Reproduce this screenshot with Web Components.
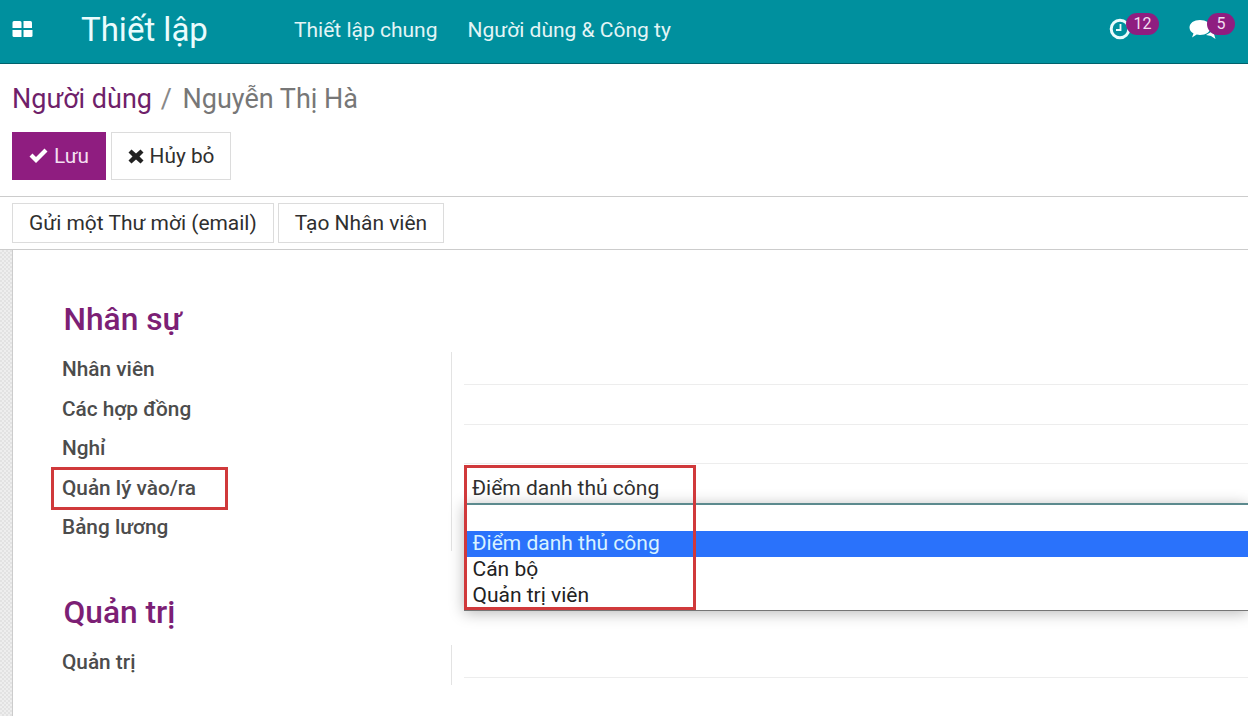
<!DOCTYPE html>
<html><head><meta charset="utf-8">
<style>
html,body{margin:0;padding:0;background:#fff;height:716px;overflow:hidden;font-family:Roboto,sans-serif}
</style></head><body>
<app-shell></app-shell>
<script>
function el(name,html,init){customElements.define(name,class extends HTMLElement{constructor(){super();this.attachShadow({mode:'open'}).innerHTML=html;}connectedCallback(){if(init)init(this);}});}
el('top-nav',`<style>
:host{display:flex;align-items:center;height:63px;background:#00909e;border-bottom:1px solid #00626c;color:#fff;font-family:Roboto,sans-serif;position:relative}
.apps{margin-left:12px;width:22px;height:18px;display:block;margin-top:-5px}
.brand{margin-left:47px;font-size:33px;line-height:40px;color:#eafcfd;margin-top:-4px;width:213px}
a{font-size:21px;color:#e3f5f6;margin-right:30px;margin-top:-4px}
.sp{flex:1}
.ic{position:absolute;display:block}
.badge{position:absolute;background:#8f1d80;color:#f3dff0;font-size:16px;height:22px;line-height:22px;border-radius:11px;text-align:center;top:13px}
</style>
<svg class="apps" viewBox="0 0 22 18"><g fill="#fff"><path d="M2 1h6a1.5 1.5 0 0 1 1.500 1.500V8H.5V2.500A1.500 1.500 0 0 1 2 1z"/><path d="M12 1h7a1.500 1.500 0 0 1 1.500 1.500V8H12z" transform="translate(-.5 0)"/><path d="M.5 10h9v7H2a1.500 1.500 0 0 1-1.500-1.500z"/><path d="M11.500 10h9v5.500A1.500 1.500 0 0 1 19 17h-7.500z"/></g></svg>
<div class="brand">Thiết lập</div><a>Thiết lập chung</a><a>Người dùng &amp; Công ty</a><div class="sp"></div>
<svg class="ic" style="left:1109px;top:18px" width="22" height="22" viewBox="0 0 22 22"><circle cx="11" cy="11" r="8.800" fill="none" stroke="#eafcfd" stroke-width="3"/><path d="M11.500 6v6H7" fill="none" stroke="#eafcfd" stroke-width="1.800"/></svg>
<div class="badge" style="left:1126px;width:33px">12</div>
<svg class="ic" style="left:1188px;top:17px" width="36" height="24" viewBox="0 0 36 24"><path d="M12 3c6 0 10.500 3 10.500 7.500S18 18 12 18c-1.200 0-2.200-.1-3.300-.4L4 20.500l1.500-4C3 15 1.500 13 1.500 10.500 1.500 6 6 3 12 3z" fill="#fff"/><path d="M23 15l3 2 1.500 5-4.500-3-5-1z" fill="#fff"/></svg>
<div class="badge" style="left:1207px;width:28px">5</div>`);
el('control-panel',`<style>
:host{display:block;font-family:Roboto,sans-serif;height:132px;border-bottom:1px solid #ccc;box-sizing:content-box}
.bc{padding:19px 12px 0;height:68px;box-sizing:border-box;font-size:27px;line-height:32px;color:#777}
.bc b{font-weight:400;color:#6f1f6a}.bc i{font-style:normal;margin:0 4px 0 2px;color:#888}
.btns{display:flex;gap:5px;padding-left:12px}
</style>
<div class="bc"><b>Người dùng</b> <i>/</i> Nguyễn Thị Hà</div>
<div class="btns"><act-btn primary style="width:94px"><svg slot="icon" width="19" height="16" viewBox="0 0 19 16"><path d="M.5 8.500L3.500 5.500 7 9 15.500.5l3 3L7 15z" fill="#fff"/></svg>Lưu</act-btn><act-btn style="width:120px"><svg slot="icon" width="16" height="15" viewBox="0 0 16 15"><path d="M.5 3.500L3.500.5 8 4.500 12.500.5l3 3L11.500 7.500l4 4-3 3L8 10.500 3.500 14.500l-3-3 4-4z" fill="#222"/></svg>Hủy bỏ</act-btn></div>`);
el('act-btn',`<style>
:host{display:inline-flex;align-items:center;justify-content:center;height:48px;box-sizing:border-box;border:1px solid #dcdcdc;background:#fff;color:#2f2f2f;font-size:20.800px;font-family:Roboto,sans-serif;gap:6px}
:host([primary]){background:#8f1d80;border-color:#8f1d80;color:#f3dff0}
</style><slot name="icon"></slot><slot></slot>`);
el('status-bar',`<style>
:host{display:flex;gap:4px;height:53px;box-sizing:border-box;padding:6px 12px 0;border-bottom:1px solid #ccc;font-family:Roboto,sans-serif}
div{height:40px;box-sizing:border-box;border:1px solid #dcdcdc;padding:0 16px;font-size:20.950px;line-height:39px;color:#2f2f2f;white-space:nowrap}
</style><div>Gửi một Thư mời (email)</div><div>Tạo Nhân viên</div>`);
el('sheet-view',`<style>
:host{display:block;position:relative;height:466px;overflow:hidden;font-family:Roboto,sans-serif}
.strip{position:absolute;left:0;top:0;bottom:0;width:12px;border-right:1px solid #ccc;background-color:#eee;background-image:linear-gradient(45deg,#e2e2e2 25%,transparent 25%,transparent 75%,#e2e2e2 75%),linear-gradient(45deg,#e2e2e2 25%,transparent 25%,transparent 75%,#e2e2e2 75%);background-size:4px 4px;background-position:0 0,2px 2px}
.body{padding:50px 0 0 62px}
</style><div class="strip"></div><div class="body">
<form-group heading="Nhân sự"><form-row>Nhân viên</form-row><form-row>Các hợp đồng</form-row><form-row>Nghỉ</form-row><form-row>Quản lý vào/ra</form-row><form-row noline>Bảng lương</form-row></form-group>
<form-group heading="Quản trị" style="margin-top:42px"><form-row>Quản trị</form-row></form-group>
</div>
<select-menu style="top:253px"></select-menu>
<red-box style="left:51px;top:217px;width:177px;height:43px"></red-box>
<red-box style="left:464px;top:215px;width:232px;height:145px"></red-box>`);
el('form-group',`<style>
:host{display:block}
h2{margin:0 0 12px 1.500px;font-size:31.700px;line-height:40px;font-weight:500;color:#7c1f75}
.rows{display:block;position:relative;padding-bottom:1px}
.rows::before{content:"";position:absolute;left:389px;top:0;bottom:0;width:1px;background:#e3e3e3}
</style><h2></h2><div class="rows"><slot></slot></div>`,h=>{h.shadowRoot.querySelector('h2').textContent=h.getAttribute('heading')});
el('form-row',`<style>
:host{display:flex;height:39.500px;box-sizing:border-box}
.l{width:402px;font-size:20.800px;font-weight:500;line-height:35px;color:#4c4c4c}
.v{flex:1;border-bottom:1px solid #ededed;height:33px;box-sizing:border-box}
:host([noline]) .v{border-bottom:0}
</style><div class="l"><slot></slot></div><div class="v"></div>`);
el('select-menu',`<style>
:host{position:absolute;left:464px;right:0;display:block;height:108px;box-sizing:border-box;background:#fff;border-top:2px solid #5c8a8e;border-bottom:1px solid #767676;box-shadow:0 2px 14px rgba(0,0,0,.28);font-size:21px;color:#222;padding-top:26px;font-family:Roboto,sans-serif}
div{height:26px;line-height:24px;padding-left:8.500px}.on{background:#2a72fb;color:#d8f2ff}
</style><div class="on">Điểm danh thủ công</div><div>Cán bộ</div><div>Quản trị viên</div>`);
el('red-box',`<style>:host{position:absolute;display:block;box-sizing:border-box;border:3px solid #d0393b}</style>`);
el('app-shell',`<style>:host{display:block;width:1248px;height:716px;overflow:hidden}
.val{position:absolute;left:472px;top:476px;font-size:21px;line-height:24px;color:#2f2f2f;font-family:Roboto,sans-serif}</style>
<top-nav></top-nav><control-panel></control-panel><status-bar></status-bar><sheet-view></sheet-view><div class="val">Điểm danh thủ công</div>`);
</script></body></html>
